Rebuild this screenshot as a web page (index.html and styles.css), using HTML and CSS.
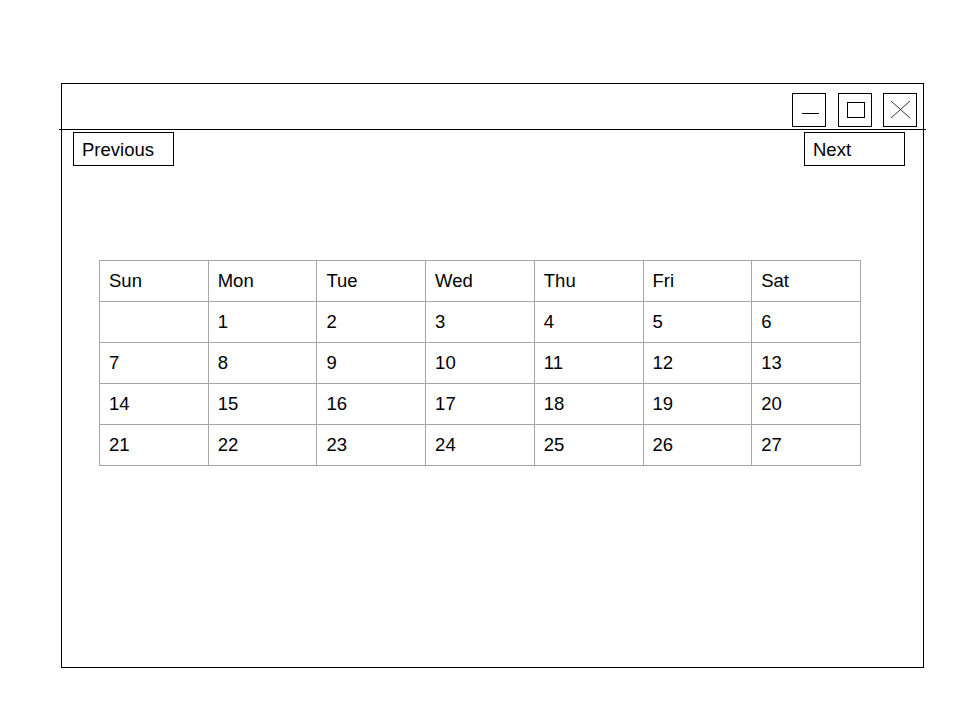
FILE: index.html
```html
<!DOCTYPE html>
<html>
<head>
<meta charset="utf-8">
<link rel="stylesheet" href="styles.css">
</head>
<body>
<div class="window">
  <div class="titlebar">
    <div class="controls">
      <div class="ctrl"><svg width="32" height="32" viewBox="0 0 32 32"><line x1="9" y1="19.5" x2="26" y2="19.5" stroke="#000" stroke-width="1"/></svg></div>
      <div class="ctrl"><svg width="32" height="32" viewBox="0 0 32 32"><rect x="8.5" y="8.5" width="17" height="15" fill="none" stroke="#000" stroke-width="1"/></svg></div>
      <div class="ctrl"><svg width="32" height="32" viewBox="0 0 32 32"><line x1="7" y1="7" x2="26" y2="24" stroke="#000" stroke-width="0.8"/><line x1="26" y1="7" x2="7" y2="24" stroke="#000" stroke-width="0.8"/></svg></div>
    </div>
  </div>
  <div class="toolbar">
    <div class="btn">Previous</div>
    <div class="btn">Next</div>
  </div>
  <table class="cal">
    <tr><td>Sun</td><td>Mon</td><td>Tue</td><td>Wed</td><td>Thu</td><td>Fri</td><td>Sat</td></tr>
    <tr><td></td><td>1</td><td>2</td><td>3</td><td>4</td><td>5</td><td>6</td></tr>
    <tr><td>7</td><td>8</td><td>9</td><td>10</td><td>11</td><td>12</td><td>13</td></tr>
    <tr><td>14</td><td>15</td><td>16</td><td>17</td><td>18</td><td>19</td><td>20</td></tr>
    <tr><td>21</td><td>22</td><td>23</td><td>24</td><td>25</td><td>26</td><td>27</td></tr>
  </table>
</div>
</body>
</html>
```
FILE: styles.css
```css
html, body {
  margin: 0;
  padding: 0;
  background: #fff;
}
body {
  font-family: "Liberation Sans", Arial, sans-serif;
  font-size: 18.5px;
  color: #000;
}
.window {
  box-sizing: border-box;
  margin: 83px 0 0 61px;
  width: 863px;
  height: 585px;
  border: 1px solid #000;
}
.titlebar {
  box-sizing: border-box;
  height: 46px;
  margin: 0 -3px;
  border-bottom: 1px solid #000;
  padding: 9px 9px 0 0;
  display: flex;
  justify-content: flex-end;
}
.controls {
  display: flex;
  gap: 11.5px;
}
.ctrl {
  box-sizing: border-box;
  width: 34px;
  height: 34px;
  border: 1px solid #000;
}
.ctrl svg {
  display: block;
}
.toolbar {
  display: flex;
  justify-content: space-between;
  padding: 2px 18px 0 11px;
}
.btn {
  box-sizing: border-box;
  width: 101px;
  height: 34px;
  border: 1px solid #000;
  padding: 1px 0 0 8px;
  line-height: 32px;
}
.cal {
  margin: 94px 0 0 37px;
  width: 762px;
  border-collapse: collapse;
  table-layout: fixed;
}
.cal td {
  height: 41px;
  padding: 0 0 0 9px;
  border: 1px solid #a6a6a6;
  box-sizing: border-box;
  vertical-align: middle;
}
```
